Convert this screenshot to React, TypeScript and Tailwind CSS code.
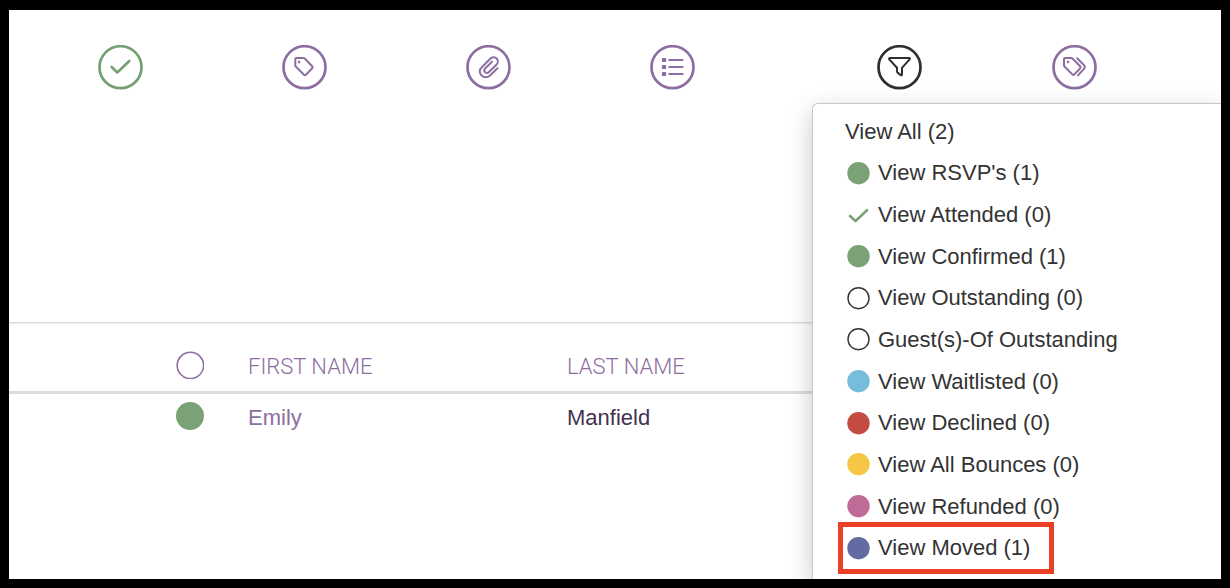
import type { ReactNode } from 'react'
import clsx from 'clsx'

interface IconButtonProps {
  label: string
  className?: string
  expanded?: boolean
  children: ReactNode
}

interface FilterItem {
  label: string
  icon?: 'dot' | 'ring' | 'check'
  color?: string
  highlighted?: boolean
}

interface Guest {
  id: number
  firstName: string
  lastName: string
}

const filters: FilterItem[] = [
  { label: 'View All (2)' },
  { label: "View RSVP's (1)", icon: 'dot', color: 'text-[#7ba277]' },
  { label: 'View Attended (0)', icon: 'check', color: 'text-[#7ba277]' },
  { label: 'View Confirmed (1)', icon: 'dot', color: 'text-[#7ba277]' },
  { label: 'View Outstanding (0)', icon: 'ring', color: 'text-[#333333]' },
  { label: 'Guest(s)-Of Outstanding', icon: 'ring', color: 'text-[#333333]' },
  { label: 'View Waitlisted (0)', icon: 'dot', color: 'text-[#76bddc]' },
  { label: 'View Declined (0)', icon: 'dot', color: 'text-[#c44b42]' },
  { label: 'View All Bounces (0)', icon: 'dot', color: 'text-[#f6c746]' },
  { label: 'View Refunded (0)', icon: 'dot', color: 'text-[#c06a98]' },
  { label: 'View Moved (1)', icon: 'dot', color: 'text-[#626ca2]', highlighted: true },
]

const guests: Guest[] = [{ id: 1, firstName: 'Emily', lastName: 'Manfield' }]

function IconButton({ label, className, expanded, children }: IconButtonProps) {
  return (
    <div className="flex flex-1 justify-center">
      <button
        type="button"
        aria-label={label}
        aria-expanded={expanded}
        className={clsx('rounded-full', className ?? 'text-[#8c6fa0]')}
      >
        <svg
          viewBox="0 0 45 45"
          className="size-[45px]"
          fill="none"
          stroke="currentColor"
          strokeWidth="2"
          strokeLinecap="round"
          strokeLinejoin="round"
        >
          <circle cx="22.5" cy="22.2" r="21" strokeWidth="2.7" />
          {children}
        </svg>
      </button>
    </div>
  )
}

function FilterIcon({ icon, color }: Pick<FilterItem, 'icon' | 'color'>) {
  return (
    <svg
      viewBox="0 0 23 23"
      className={clsx('ml-0.5 size-[23px]', color)}
      fill="none"
      stroke="currentColor"
      strokeLinecap="round"
      strokeLinejoin="round"
    >
      {icon === 'dot' ? <circle cx="11.5" cy="11.2" r="11.2" fill="currentColor" stroke="none" /> : null}
      {icon === 'ring' ? <circle cx="11.5" cy="11.2" r="10.5" strokeWidth="1.4" /> : null}
      {icon === 'check' ? <path d="M3 12 8.5 17 20 6.2" strokeWidth="2.6" /> : null}
    </svg>
  )
}

function FilterMenu() {
  return (
    <ul className="absolute inset-x-0 top-[93px] z-10 grid h-[476px] auto-rows-fr rounded-tl-md border-t border-l border-[#c8c8c8] bg-white pt-[7px] pb-2.5 pl-8 text-[22px] leading-8 text-[#333333] shadow-[0_8px_24px_rgba(0,0,0,0.22)]">
      {filters.map((item) => (
        <li key={item.label} className="flex items-center">
          <button type="button" className="relative flex items-center gap-2 whitespace-nowrap">
            {item.icon ? <FilterIcon icon={item.icon} color={item.color} /> : null}
            {item.label}
            {item.highlighted ? (
              <span className="pointer-events-none absolute -inset-y-[10px] -right-6 -left-[7px] border-[5px] border-[#ea4025]" />
            ) : null}
          </button>
        </li>
      ))}
    </ul>
  )
}

function Toolbar() {
  return (
    <header className="flex h-[313px] items-start border-b border-[#d8d8d8] pt-[35px] pl-[19px] shadow-[0_1px_2px_rgba(0,0,0,0.08)]">
      <div className="flex flex-[736]">
        <IconButton label="Check in" className="text-[#74a072]">
          <path d="M13.5 21.8 19.3 27.5 31.3 16" strokeWidth="2.6" />
        </IconButton>
        <IconButton label="Tag">
          <path d="M14.3 13H21.4Q22.3 13 23 13.7L30.2 21.2Q31.2 22.3 30.2 23.3L24 29.7Q23 30.6 22 29.7L14 21.8Q13.3 21.1 13.3 20.2V14Q13.3 13 14.3 13Z" />
          <circle cx="17.1" cy="17.1" r="1.3" fill="currentColor" stroke="none" />
        </IconButton>
        <IconButton label="Attachments">
          <path d="M31.5 23.2 24 30.5C21.2 33 17.4 32.8 15.2 30.2 13.2 27.7 13.5 24.6 15.8 22.3L24 14C26 12 29 11.6 30.7 13.5 32.4 15.4 32 18.2 30.4 19.8L23 27C21.8 28.2 20 28.2 19 27.1 18 26 18.2 24.3 19.3 23.2L26 16.8" />
        </IconButton>
        <IconButton label="List">
          <path d="M19.2 15H32.6M19.2 22H32.6M19.2 29H32.6" />
          <path
            d="M12.6 13.6h2.8v2.8h-2.8zM12.6 20.6h2.8v2.8h-2.8zM12.6 27.6h2.8v2.8h-2.8z"
            fill="currentColor"
            strokeWidth="1.4"
          />
        </IconButton>
      </div>

      <div className="flex-[409] pl-12">
        <div className="relative -mt-[35px] pt-[35px] pr-[59px]">
          <div className="flex">
            <IconButton label="Filter" className="text-[#2f2f2f]" expanded>
              <path d="M13 13H32Q33.4 13.2 32.6 14.4L25 22.8V29.6Q24.8 30.8 23.8 30.1L20.6 27.6Q20 27.1 20 26.4V22.8L12.3 14.4Q11.6 13.2 13 13Z" />
            </IconButton>
            <IconButton label="All tags">
              <path d="M13 13H19Q20 13 20.7 13.7L28.2 21.2Q29.2 22.3 28.2 23.3L22.4 29.4Q21.4 30.4 20.4 29.4L12.7 21.8Q12 21.1 12 20.2V14Q12 13 13 13Z" />
              <path d="M25.2 13.2 32 20.2Q33.6 22 32 23.8L26 30.4" />
              <circle cx="16" cy="17" r="1.3" fill="currentColor" stroke="none" />
            </IconButton>
          </div>
          <FilterMenu />
        </div>
      </div>
    </header>
  )
}

function GuestTable() {
  return (
    <table className="w-full table-fixed border-collapse text-left text-[22px]">
      <colgroup>
        <col className="w-[239px]" />
        <col className="w-[319px]" />
        <col />
      </colgroup>
      <thead className="border-b-[3px] border-[#dcdcdc] font-['Roboto',sans-serif] text-[#8c6fa0]">
        <tr className="h-[69px]">
          <th className="pt-4 pl-[167px]">
            <button type="button" aria-label="Sort by status" className="block text-[#8c6fa0]">
              <svg viewBox="0 0 28 28" className="size-7" fill="none" stroke="currentColor" strokeWidth="1.6">
                <circle cx="14.4" cy="14.4" r="13.2" />
              </svg>
            </button>
          </th>
          <th className="pt-5 font-light">FIRST NAME</th>
          <th className="pt-5 font-light">LAST NAME</th>
        </tr>
      </thead>
      <tbody>
        {guests.map((guest) => (
          <tr key={guest.id} className="h-[47px]">
            <td className="pl-[167px]">
              <span className="block size-7 rounded-full bg-[#7ba277]" />
            </td>
            <td className="pt-0.5">
              <a href="#guest" className="text-[#8c6fa0]">
                {guest.firstName}
              </a>
            </td>
            <td className="pt-0.5 text-[#43324f]">{guest.lastName}</td>
          </tr>
        ))}
      </tbody>
    </table>
  )
}

export default function App() {
  return (
    <div className="min-h-screen overflow-hidden border-x-[9px] border-t-[10px] border-b-[9px] border-black bg-white font-['Liberation_Sans',Arial,sans-serif]">
      <Toolbar />
      <GuestTable />
    </div>
  )
}
